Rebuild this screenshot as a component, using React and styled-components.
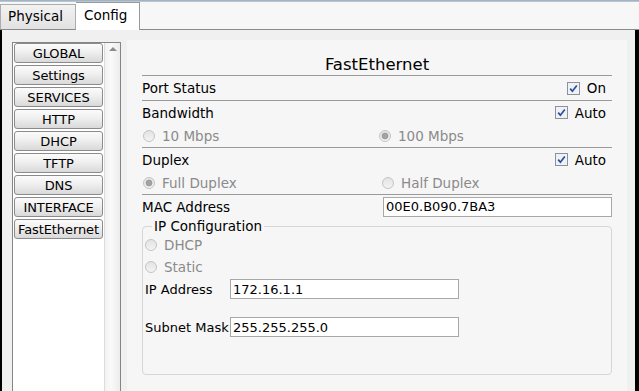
import React from "react";
import styled, { createGlobalStyle } from "styled-components";

const menu = ["GLOBAL", "Settings", "SERVICES", "HTTP", "DHCP", "TFTP", "DNS", "INTERFACE", "FastEthernet"];

const Radio = ({ checked }) => (
  <svg width="12" height="12" viewBox="0 0 12 12">
    <defs>
      <linearGradient id="rg" x1="0" y1="0" x2="0" y2="1">
        <stop offset="0" stopColor="#e2e2e2" />
        <stop offset="1" stopColor="#f4f4f4" />
      </linearGradient>
    </defs>
    <circle cx="6" cy="6" r="5.5" fill="url(#rg)" stroke="#c4c4c4" />
    {checked && <circle cx="6" cy="6" r="3" fill="#a3a3a3" stroke="#8c8c8c" strokeWidth="0.6" />}
  </svg>
);

const Check = () => (
  <svg width="13" height="13" viewBox="0 0 13 13">
    <rect x="0.5" y="0.5" width="12" height="12" fill="#eef1f5" stroke="#8e9298" />
    <path d="M3.2 6.6 L5.4 9.2 L9.8 3.4" fill="none" stroke="#2d4c9c" strokeWidth="1.7" />
  </svg>
);

const App = () => {
  return (
    <>
      <Global />
      <Frame>
        <TopLine />
        <TabBar>
          <Tab>Physical</Tab>
          <Tab $active>Config</Tab>
        </TabBar>
        <Main>
          <ListBox>
            <ButtonColumn>
              {menu.map((m) => (
                <MenuButton key={m}>{m}</MenuButton>
              ))}
            </ButtonColumn>
            <ScrollTrack>
              <UpArrow />
            </ScrollTrack>
          </ListBox>
          <Panel>
            <Title>FastEthernet</Title>
            <Section>
              <Row $h={24}>
                <Label>Port Status</Label>
                <CheckWrap>
                  <Check />
                  <span>On</span>
                </CheckWrap>
              </Row>
            </Section>
            <Section>
              <Row>
                <Label>Bandwidth</Label>
                <CheckWrap>
                  <Check />
                  <span>Auto</span>
                </CheckWrap>
              </Row>
              <RadioRow $split={236}>
                <RadioItem>
                  <Radio />
                  <span>10 Mbps</span>
                </RadioItem>
                <RadioItem>
                  <Radio checked />
                  <span>100 Mbps</span>
                </RadioItem>
              </RadioRow>
            </Section>
            <Section>
              <Row>
                <Label>Duplex</Label>
                <CheckWrap>
                  <Check />
                  <span>Auto</span>
                </CheckWrap>
              </Row>
              <RadioRow $split={239}>
                <RadioItem>
                  <Radio checked />
                  <span>Full Duplex</span>
                </RadioItem>
                <RadioItem>
                  <Radio />
                  <span>Half Duplex</span>
                </RadioItem>
              </RadioRow>
            </Section>
            <Row $h={23}>
              <Label>MAC Address</Label>
              <Field value="00E0.B090.7BA3" readOnly />
            </Row>
            <IpBox>
              <Legend>IP Configuration</Legend>
              <RadioRow $split={0} $h={22}>
                <RadioItem>
                  <Radio />
                  <span>DHCP</span>
                </RadioItem>
              </RadioRow>
              <RadioRow $split={0} $h={22}>
                <RadioItem>
                  <Radio />
                  <span>Static</span>
                </RadioItem>
              </RadioRow>
              <FormRow>
                <FormLabel>IP Address</FormLabel>
                <Field value="172.16.1.1" readOnly />
              </FormRow>
              <FormRow $gap={16}>
                <FormLabel>Subnet Mask</FormLabel>
                <Field value="255.255.255.0" readOnly />
              </FormRow>
            </IpBox>
          </Panel>
        </Main>
      </Frame>
    </>
  );
};

export default App;

const Global = createGlobalStyle`
  html, body {
    margin: 0;
    padding: 0;
    background: #f0f0f0;
    overflow: hidden;
  }
  * {
    box-sizing: border-box;
  }
`;

const Frame = styled.div`
  width: 639px;
  height: 391px;
  overflow: hidden;
  display: flex;
  flex-direction: column;
  font-family: "DejaVu Sans", Verdana, sans-serif;
  font-size: 13.5px;
  color: #111;
`;

const TopLine = styled.div`
  height: 2px;
  background: linear-gradient(#97a9bc, #c3cfdb);
`;

const TabBar = styled.div`
  height: 28px;
  display: flex;
  align-items: flex-end;
  background: #f7f7f7;
  border-bottom: 1px solid #8a8a8a;
`;

const Tab = styled.div`
  height: ${(p) => (p.$active ? "28px" : "25px")};
  margin-bottom: ${(p) => (p.$active ? "-1px" : "0")};
  padding: ${(p) => (p.$active ? "4px 0 0 8px" : "3px 0 0 7px")};
  width: ${(p) => (p.$active ? "64px" : "76px")};
  background: ${(p) => (p.$active ? "#ffffff" : "linear-gradient(#f2f2f2, #e2e2e2)")};
  border: 1px solid ${(p) => (p.$active ? "#9a9a9a" : "#acacac")};
  border-bottom: none;
  border-left: ${(p) => (p.$active ? "none" : "1px solid #acacac")};
  font-size: 13.5px;
  color: #000;
`;

const Main = styled.div`
  flex: 1;
  display: flex;
  align-items: stretch;
  gap: 6px;
  padding: 10px 8px 0 10px;
  background: #f0f0f0;
  border-left: 2px solid #000;
  border-right: 4px solid #000;
  min-height: 0;
`;

const ListBox = styled.div`
  width: 109px;
  margin-top: 2px;
  display: flex;
  border: 1px solid #858585;
  border-bottom: none;
  background: #fff;
`;

const ButtonColumn = styled.div`
  width: 91px;
  padding: 0 0 0 1px;
  display: flex;
  flex-direction: column;
  gap: 2px;
`;

const MenuButton = styled.div`
  width: 89px;
  height: 20px;
  display: flex;
  align-items: center;
  justify-content: center;
  white-space: nowrap;
  border: 1px solid #8b8b8b;
  border-radius: 3px;
  background: linear-gradient(#fbfbfb 0%, #efefef 45%, #d9d9d9 100%);
  font-size: 13px;
  letter-spacing: -0.1px;
  color: #000;
`;

const ScrollTrack = styled.div`
  flex: 1;
  display: flex;
  justify-content: center;
  padding-top: 4px;
  background: linear-gradient(90deg, #f2f2f2, #fafafa 40%, #ececec);
  border-left: 1px solid #dcdcdc;
`;

const UpArrow = styled.div`
  width: 0;
  height: 0;
  border-left: 4px solid transparent;
  border-right: 4px solid transparent;
  border-bottom: 4px solid #8c8c8c;
`;

const Panel = styled.div`
  width: 500px;
  background: #f6f6f6;
  padding: 0 15px;
  display: flex;
  flex-direction: column;
`;

const Title = styled.div`
  height: 36px;
  display: flex;
  align-items: flex-end;
  justify-content: center;
  padding-bottom: 1px;
  font-size: 16.5px;
  border-bottom: 1px solid #9a9a9a;
  color: #000;
`;

const Section = styled.div`
  border-bottom: 1px solid #9a9a9a;
`;

const Row = styled.div`
  height: ${(p) => p.$h || 23}px;
  display: flex;
  align-items: center;
  justify-content: space-between;
`;

const Label = styled.span`
  color: #000;
`;

const CheckWrap = styled.span`
  display: flex;
  align-items: center;
  gap: 7px;
  padding-right: 6px;
  color: #000;
  svg {
    display: block;
  }
`;

const RadioRow = styled.div`
  height: ${(p) => p.$h || 23}px;
  display: grid;
  grid-template-columns: ${(p) => (p.$split ? `${p.$split}px 1fr` : "1fr")};
  align-items: center;
`;

const RadioItem = styled.span`
  display: flex;
  align-items: center;
  gap: 7px;
  margin-left: 1px;
  color: #8a8a8a;
  svg {
    display: block;
    flex: none;
  }
`;

const Field = styled.input`
  width: 229px;
  height: 20px;
  border: 1px solid #a8a8a8;
  background: #fff;
  padding: 0 2px;
  font-family: "DejaVu Sans", Verdana, sans-serif;
  font-size: 13px;
  color: #000;
  outline: none;
`;

const IpBox = styled.fieldset`
  margin: 0;
  height: 157px;
  padding: 0 1px;
  border: 1px solid #d6d6d6;
  border-radius: 4px;
  min-width: 0;
`;

const Legend = styled.legend`
  margin-left: 8px;
  padding: 0 2px;
  color: #000;
  font-size: 13.5px;
`;

const FormRow = styled.div`
  height: 22px;
  margin-top: ${(p) => p.$gap || 0}px;
  display: flex;
  align-items: center;
`;

const FormLabel = styled.span`
  width: 86px;
  padding-left: 1px;
  white-space: nowrap;
  font-size: 13px;
  color: #000;
`;
